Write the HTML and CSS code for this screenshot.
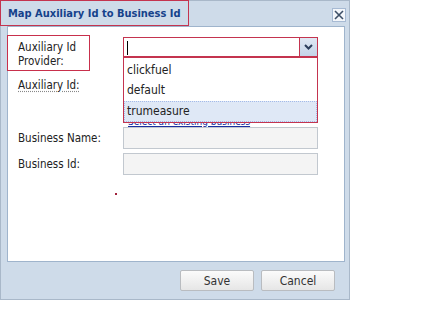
FILE: index.html
```html
<!DOCTYPE html>
<html lang="en">
<head>
  <meta charset="UTF-8" />
  <title>Map Auxiliary Id to Business Id</title>
  <link rel="stylesheet" href="styles.css">
</head>
<body>
  <div class="window">
    <div class="window-header">
      <div class="window-title">Map Auxiliary Id to Business Id</div>
      <button class="close-btn">
        <svg width="10" height="10" viewBox="0 0 10 10"><path d="M1 1 L9 9 M9 1 L1 9" stroke="#3d4f66" stroke-width="1.6"/></svg>
      </button>
    </div>

    <div class="window-body">
      <div class="form-row row-provider">
        <label class="field-label label-boxed">Auxiliary Id<br>Provider:</label>
        <div class="combo">
          <div class="combo-input"><span class="caret"></span></div>
          <div class="combo-trigger">
            <svg width="9" height="6" viewBox="0 0 9 6"><path d="M1 1 L4.5 4.5 L8 1" stroke="#2c3e5c" stroke-width="2" fill="none"/></svg>
          </div>
          <ul class="combo-list">
            <li>clickfuel</li>
            <li>default</li>
            <li class="selected">trumeasure</li>
          </ul>
        </div>
      </div>

      <div class="form-row row-auxid">
        <label class="field-label dotted">Auxiliary Id:</label>
        <div class="field-col">
          <input type="text" class="text-field" />
          <a href="#" class="existing-link">Select an existing business</a>
        </div>
      </div>

      <div class="form-row">
        <label class="field-label">Business Name:</label>
        <input type="text" class="text-field disabled" />
      </div>

      <div class="form-row">
        <label class="field-label">Business Id:</label>
        <input type="text" class="text-field disabled" />
      </div>

      <span class="stray-dot"></span>
    </div>

    <div class="window-footer">
      <button class="btn">Save</button>
      <button class="btn">Cancel</button>
    </div>
  </div>
</body>
</html>
```

FILE: styles.css
```css
body {
  margin: 0;
  background-color: #ffffff;
  font-family: "DejaVu Sans Condensed", "DejaVu Sans", sans-serif;
  font-size: 11.5px;
  color: #222;
}

.window {
  width: 348px;
  height: 298px;
  border: 1px solid #a9b8c9;
  background-color: #cedbe9;
  display: flex;
  flex-direction: column;
}

.window-header {
  height: 25px;
  display: flex;
  align-items: center;
  justify-content: space-between;
}

.window-title {
  height: 26px;
  width: 189px;
  margin-top: -1px;
  margin-left: -1px;
  padding-left: 7px;
  border: 1px solid #c4344f;
  box-sizing: border-box;
  display: flex;
  align-items: center;
  white-space: nowrap;
  font-weight: bold;
  font-size: 11px;
  color: #15428b;
}

.close-btn {
  width: 14px;
  height: 14px;
  margin-right: 3px;
  margin-top: 2px;
  padding: 0;
  border: 1px solid #a7bad3;
  background-color: #f3f6fa;
  display: flex;
  align-items: center;
  justify-content: center;
}

.window-body {
  position: relative;
  margin: 0 4px 0 6px;
  height: 224px;
  background-color: #fff;
  border: 1px solid #9fb4cc;
  padding: 10px 0 0 10px;
}

.form-row {
  display: flex;
  align-items: center;
  margin-bottom: 4px;
}

.field-label {
  width: 105px;
  flex-shrink: 0;
  line-height: 14px;
  color: #222;
}

.label-boxed {
  margin-left: -11px;
  margin-top: -2px;
  width: 71px;
  margin-right: 33px;
  padding: 4px 0 2px 10px;
  border: 1px solid #c8304c;
}

.row-provider {
  align-items: flex-start;
  margin-bottom: 0;
}

.combo {
  position: relative;
  display: flex;
  width: 195px;
  height: 20px;
  border: 1px solid #c4344f;
  box-sizing: border-box;
}

.combo-input {
  flex: 1;
  background-color: #fff;
  padding: 3px 0 0 3px;
}

.caret {
  display: block;
  width: 1px;
  height: 14px;
  background-color: #000;
}

.combo-trigger {
  width: 17px;
  border-left: 1px solid #c4344f;
  background: linear-gradient(#dfe8f4, #c4d4e8);
  display: flex;
  align-items: center;
  justify-content: center;
}

.combo-list {
  position: absolute;
  top: 19px;
  left: -1px;
  width: 195px;
  margin: 0;
  padding: 2px 0 0;
  list-style: none;
  background-color: #fff;
  border: 1px solid #c4344f;
  box-sizing: border-box;
  z-index: 2;
}

.combo-list li {
  height: 20px;
  line-height: 20px;
  padding-left: 3px;
  font-size: 12px;
  color: #222;
}

.combo-list li.selected {
  margin-top: 1px;
  background-color: #dfe8f6;
  border: 1px dotted #a3bae9;
  height: 19px;
  line-height: 19px;
  padding-left: 2px;
}

.row-auxid {
  align-items: flex-start;
  margin-top: 7px;
  margin-bottom: 0;
}

.dotted {
  text-decoration: underline dotted #888;
  text-underline-offset: 2px;
}

.field-col {
  display: flex;
  flex-direction: column;
}

.text-field {
  width: 195px;
  height: 22px;
  box-sizing: border-box;
  border: 1px solid #c2c8cf;
  background-color: #fff;
  margin: 0;
}

.text-field.disabled {
  background-color: #f4f4f4;
}

.existing-link {
  margin: 17px 0 0 5px;
  font-size: 10px;
  line-height: 10px;
  color: #1a2ea0;
}

.stray-dot {
  position: absolute;
  left: 107px;
  top: 166px;
  width: 2px;
  height: 2px;
  background-color: #a0203a;
}

.window-footer {
  flex: 1;
  display: flex;
  justify-content: flex-end;
  align-items: center;
  gap: 7px;
  padding-right: 14px;
}

.btn {
  width: 74px;
  height: 21px;
  padding: 0;
  border: 1px solid #b9bcc0;
  border-radius: 2px;
  background: linear-gradient(#fbfbfb, #e6e6e6);
  font-family: "DejaVu Sans Condensed", "DejaVu Sans", sans-serif;
  font-size: 12px;
  color: #333;
}
```
